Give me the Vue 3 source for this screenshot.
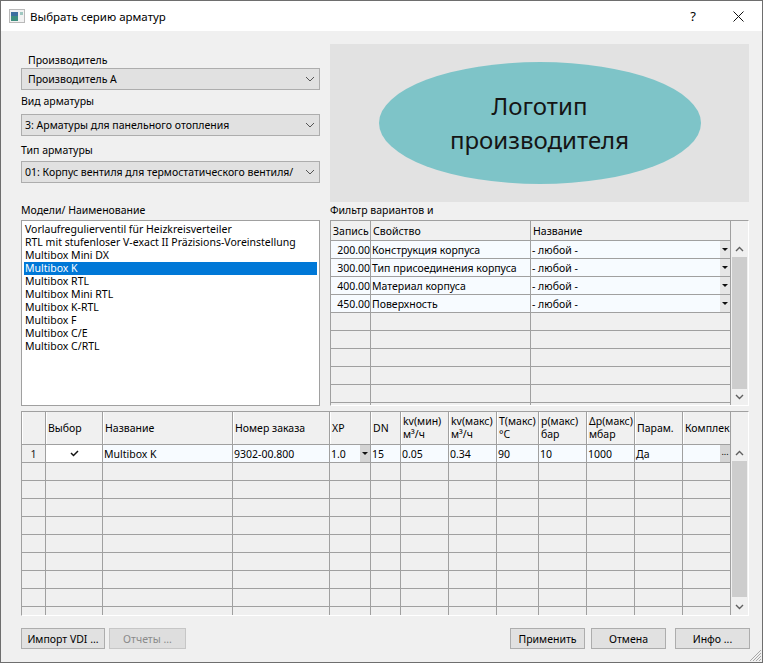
<script setup>
const models = [
  'Vorlaufregulierventil für Heizkreisverteiler',
  'RTL mit stufenloser V-exact II Präzisions-Voreinstellung',
  'Multibox Mini DX',
  'Multibox K',
  'Multibox RTL',
  'Multibox Mini RTL',
  'Multibox K-RTL',
  'Multibox F',
  'Multibox C/E',
  'Multibox C/RTL'
]
const filters = [
  ['200.00', 'Конструкция корпуса'],
  ['300.00', 'Тип присоединения корпуса'],
  ['400.00', 'Материал корпуса'],
  ['450.00', 'Поверхность']
]
const headers = [
  [''], ['Выбор'], ['Название'], ['Номер заказа'], ['XP'], ['DN'],
  ['kv(мин)', 'м³/ч'], ['kv(макс)', 'м³/ч'], ['T(макс)', '°C'], ['p(макс)', 'бар'],
  ['Δp(макс)', 'мбар'], ['Парам.'], ['Комплек']
]
const values = ['Multibox K', '9302-00.800', '1.0', '15', '0.05', '0.34', '90', '10', '1000', 'Да', '']
</script>

<template>
  <div class="win">
    <header class="title">
      <svg class="appicon" width="16" height="14" viewBox="0 0 16 14">
        <rect x="0.5" y="0.5" width="15" height="13" fill="#f2f2f2" stroke="#b9b9b9" />
        <rect x="2" y="3" width="7" height="9" fill="#3f8f7f" />
        <rect x="2" y="3" width="7" height="4" fill="#3d6f9f" />
        <rect x="11" y="3" width="3" height="3" fill="#9fc7c0" />
      </svg>
      <span class="title-text">Выбрать серию арматур</span>
      <span class="help">?</span>
      <svg class="close" width="11" height="11" viewBox="0 0 11 11">
        <path d="M0.5 0.5 L10.5 10.5 M10.5 0.5 L0.5 10.5" stroke="#111" fill="none" />
      </svg>
    </header>

    <main class="body">
      <section class="top">
        <div class="selectors">
          <label class="lab lab1">Производитель</label>
          <div class="combo combo1"><span>Производитель А</span><svg class="chev" width="10" height="6" viewBox="0 0 10 6"><path d="M1 1 L5 5 L9 1" fill="none" stroke="#555" /></svg></div>
          <label class="lab lab2">Вид арматуры</label>
          <div class="combo"><span>3: Арматуры для панельного отопления</span><svg class="chev" width="10" height="6" viewBox="0 0 10 6"><path d="M1 1 L5 5 L9 1" fill="none" stroke="#555" /></svg></div>
          <label class="lab lab3">Тип арматуры</label>
          <div class="combo"><span>01: Корпус вентиля для термостатического вентиля/</span><svg class="chev" width="10" height="6" viewBox="0 0 10 6"><path d="M1 1 L5 5 L9 1" fill="none" stroke="#555" /></svg></div>
        </div>
        <div class="logo">
          <div class="oval">Логотип<br />производителя</div>
        </div>
      </section>

      <section class="mid">
        <div class="col-l">
          <div class="lab midlab">Модели/ Наименование</div>
          <ul class="list">
            <li v-for="m in models" :key="m" :class="{ sel: m === 'Multibox K' }">{{ m }}</li>
          </ul>
        </div>
        <div class="col-r">
          <div class="lab midlab">Фильтр вариантов и</div>
          <div class="gridbox gb1">
            <div class="tbl tbl-filter">
              <div class="cell hd">Запись</div>
              <div class="cell hd">Свойство</div>
              <div class="cell hd">Название</div>
              <template v-for="f in filters" :key="f[0]">
                <div class="cell act num">{{ f[0] }}</div>
                <div class="cell act">{{ f[1] }}</div>
                <div class="cell act drop"><span>- любой -</span><i class="ddb"><b class="tri"></b></i></div>
              </template>
              <div v-for="n in 18" :key="n" class="cell"></div>
            </div>
            <div class="sb">
              <div class="sb-head h20"></div>
              <div class="sb-btn"><svg width="9" height="6" viewBox="0 0 9 6"><path d="M1 5 L4.5 1.5 L8 5" fill="none" stroke="#606060" stroke-width="1.4" /></svg></div>
              <div class="thumb t1"></div>
              <div class="sb-fill"></div>
              <div class="sb-btn"><svg width="9" height="6" viewBox="0 0 9 6"><path d="M1 1 L4.5 4.5 L8 1" fill="none" stroke="#606060" stroke-width="1.4" /></svg></div>
            </div>
          </div>
        </div>
      </section>

      <section class="gridbox gb2">
        <div class="tbl tbl-parts">
          <div v-for="(h, i) in headers" :key="i" class="cell hd hd2">
            <div><template v-for="(l, j) in h" :key="j">{{ l }}<br v-if="j < h.length - 1" /></template></div>
          </div>
          <div class="cell rownum">1</div>
          <div class="cell check">
            <svg width="9" height="7" viewBox="0 0 9 7"><path d="M1 3 L3.5 5.5 L8 1" fill="none" stroke="#111" stroke-width="1.5" /></svg>
          </div>
          <div v-for="(v, i) in values" :key="i" class="cell act" :class="{ drop: i === 2 || i === 10 }">
            <span>{{ v }}</span>
            <i v-if="i === 2" class="ddb dark"><b class="tri"></b></i>
            <i v-if="i === 10" class="ddb dark dots">...</i>
          </div>
          <div v-for="n in 117" :key="'e' + n" class="cell"></div>
        </div>
        <div class="sb">
          <div class="sb-head h33"></div>
          <div class="sb-btn"><svg width="9" height="6" viewBox="0 0 9 6"><path d="M1 5 L4.5 1.5 L8 5" fill="none" stroke="#606060" stroke-width="1.4" /></svg></div>
          <div class="thumb t2"></div>
          <div class="sb-fill"></div>
          <div class="sb-btn"><svg width="9" height="6" viewBox="0 0 9 6"><path d="M1 1 L4.5 4.5 L8 1" fill="none" stroke="#606060" stroke-width="1.4" /></svg></div>
        </div>
      </section>

      <footer class="actions">
        <button class="btn w84">Импорт VDI ...</button>
        <button class="btn w77 off" disabled>Отчеты ...</button>
        <span class="spacer"></span>
        <button class="btn w75">Применить</button>
        <button class="btn w75">Отмена</button>
        <button class="btn w75 info">Инфо ...</button>
      </footer>
    </main>

    <svg class="grip" width="13" height="13" viewBox="0 0 13 13">
      <path d="M12 1 L1 12 M12 4 L4 12 M12 7 L7 12 M12 10 L10 12" stroke="#a8a8a8" fill="none" />
    </svg>
  </div>
</template>

<style scoped>
.win {
  position: relative;
  box-sizing: border-box;
  width: 763px;
  height: 663px;
  border: 1px solid #6e6e6e;
  background: #f0f0f0;
  color: #000;
  font-family: "Noto Sans", "Open Sans", sans-serif;
  font-size: 10.5px;
  overflow: hidden;
}
.title {
  display: flex;
  align-items: center;
  height: 30px;
  background: #fff;
  padding-left: 8px;
}
.appicon { flex: none; }
.title-text { margin-left: 5px; font-size: 11.5px; }
.help { margin-left: auto; margin-right: 37px; font-size: 13px; }
.close { margin-right: 18px; }
.body { padding: 13px 0 0 20px; }
.top { display: flex; height: 158px; }
.selectors { width: 299px; padding-top: 8px; }
.lab { display: block; height: 16px; line-height: 16px; }
.lab1 { padding-left: 7px; }
.lab2 { margin-top: 3px; margin-bottom: 5px; }
.lab3 { margin-top: 6px; margin-bottom: 3px; }
.combo {
  box-sizing: border-box;
  display: flex;
  align-items: center;
  justify-content: space-between;
  height: 22px;
  padding: 0 4px 0 3px;
  background: #e1e1e1;
  border: 1px solid #adadad;
}
.combo1 { padding-left: 6px; }
.chev { flex: none; }
.logo {
  display: flex;
  align-items: center;
  justify-content: center;
  box-sizing: border-box;
  width: 419px;
  height: 158px;
  margin-left: 10px;
  background: #e2e2e2;
  padding-bottom: 0;
}
.oval {
  width: 322px;
  height: 122px;
  border-radius: 50%;
  background: #7ec4c8;
  display: flex;
  flex-direction: column;
  justify-content: center;
  text-align: center;
  font-size: 24px;
  line-height: 34px;
  color: #151515;
}
.mid { display: flex; }
.col-l { width: 299px; }
.col-r { width: 419px; margin-left: 10px; }
.midlab { height: 18px; line-height: 16px; }
.list {
  box-sizing: border-box;
  list-style: none;
  margin: 0;
  height: 186px;
  padding: 2px;
  background: #fff;
  border: 1px solid #a0a0a0;
}
.list li { height: 13px; line-height: 13px; padding-left: 1px; white-space: nowrap; }
.list li.sel { background: #0078d7; color: #fff; }
.gridbox {
  box-sizing: border-box;
  display: flex;
  border-top: 1px solid #a0a0a0;
  border-left: 1px solid #a0a0a0;
  border-right: 1px solid #fff;
  border-bottom: 1px solid #fff;
  overflow: hidden;
}
.gb1 { height: 186px; width: 419px; }
.gb2 { height: 205px; width: 728px; margin-top: 5px; }
.tbl { display: grid; grid-auto-rows: 18px; align-content: start; overflow: hidden; }
.tbl-filter { grid-template-columns: 40px 160px 200px; grid-template-rows: 20px; width: 400px; }
.tbl-parts {
  grid-template-columns: 24px 57px 130px 97px 41px 30px 48px 48px 42px 48px 48px 48px 48px;
  grid-template-rows: 33px;
  width: 709px;
}
.cell {
  box-sizing: border-box;
  display: flex;
  align-items: center;
  min-width: 0;
  padding-left: 1px;
  white-space: nowrap;
  overflow: hidden;
  border-right: 1px solid #a0a0a0;
  border-bottom: 1px solid #a0a0a0;
}
.hd { padding-left: 2px; }
.hd2 { line-height: 13px; box-shadow: inset 1px 0 0 #fff; }
.act { background: #f7fbff; }
.num { justify-content: flex-end; }
.drop { justify-content: space-between; padding-right: 0; }
.ddb {
  flex: none;
  display: flex;
  align-items: center;
  justify-content: center;
  width: 10px;
  height: 100%;
  background: #e6e6e6;
  font-style: normal;
}
.ddb.dark { background: #d4d4d4; }
.dots { font-size: 9px; line-height: 10px; padding-bottom: 3px; box-sizing: border-box; }
.tri {
  display: block;
  width: 0;
  height: 0;
  border-left: 3px solid transparent;
  border-right: 3px solid transparent;
  border-top: 3px solid #111;
}
.rownum { justify-content: center; padding: 0; color: #222; }
.check { justify-content: center; padding: 0; background: #fff; }
.sb {
  flex: none;
  display: flex;
  flex-direction: column;
  width: 17px;
  background: #f0f0f0;
}
.sb-head { flex: none; }
.h20 { height: 20px; }
.h33 { height: 33px; }
.sb-btn {
  flex: none;
  display: flex;
  align-items: center;
  justify-content: center;
  height: 16px;
}
.thumb { flex: none; margin: 0 1px 0 1px; background: #cdcdcd; }
.t1 { height: 132px; }
.t2 { height: 136px; }
.sb-fill { flex: 1; }
.actions { display: flex; margin-top: 12px; width: 729px; }
.spacer { flex: 1; }
.btn {
  box-sizing: border-box;
  height: 21px;
  padding: 0;
  font: inherit;
  color: #000;
  background: #e1e1e1;
  border: 1px solid #adadad;
  border-radius: 0;
}
.w84 { width: 84px; }
.w77 { width: 77px; margin-left: 4px; }
.w75 { width: 75px; margin-left: 6px; }
.info { margin-left: 9px; }
.off { background: #dedede; border-color: #c6c6c6; color: #8a8a8a; }
.grip { position: absolute; right: 0; bottom: 0; }
</style>
